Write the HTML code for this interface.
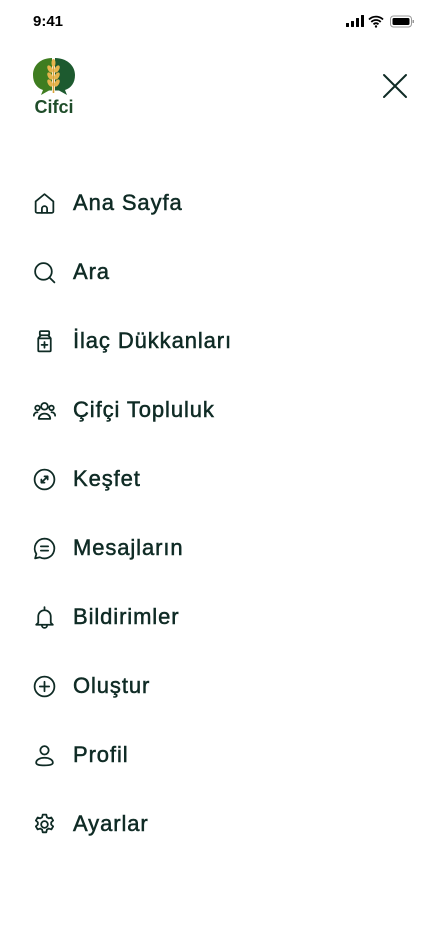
<!DOCTYPE html>
<html><head><meta charset="utf-8"><style>
*{margin:0;padding:0;box-sizing:border-box}
body{width:428px;height:926px;background:#fff;font-family:"Liberation Sans",sans-serif;color:#0f2b25;position:relative;overflow:hidden}
.sb{position:absolute;top:13px;left:33px;font-size:15px;font-weight:bold;color:#000}
.item{position:absolute;left:32px;height:30px;display:flex;align-items:center}
.item svg{width:25px;height:25px;fill:none;stroke:#0f2b25;stroke-width:1.7;stroke-linecap:round;stroke-linejoin:round}
.item span{margin-left:16px;font-size:22px;font-weight:normal;-webkit-text-stroke:0.5px #0f2b25;letter-spacing:0.9px}
</style></head><body>
<div class="sb">9:41</div>
<svg style="position:absolute;left:346px;top:15px" width="70" height="14" viewBox="0 0 70 14">
<rect x="0" y="8" width="3" height="4" rx="0.5" fill="#000"/><rect x="5" y="6" width="3" height="6" rx="0.5" fill="#000"/><rect x="10" y="3" width="3" height="9" rx="0.5" fill="#000"/><rect x="15" y="0" width="3" height="12" rx="0.5" fill="#000"/>
<path d="M23 4.5a10 10 0 0 1 14 0M25.3 7a6.5 6.5 0 0 1 9.4 0M27.6 9.4a3 3 0 0 1 4.8 0" stroke="#000" stroke-width="1.8" fill="none"/><circle cx="30" cy="11.5" r="1.2" fill="#000"/>
<rect x="44.5" y="1" width="21" height="11" rx="3" stroke="#999" fill="none"/><rect x="46.5" y="3" width="17" height="7" rx="1.5" fill="#000"/><rect x="66.5" y="5" width="1.5" height="3" fill="#999"/>
</svg>
<svg style="position:absolute;left:32px;top:57px" width="44" height="58" viewBox="0 0 44 58">
<path d="M20 1C9 1 1 8 1 18c0 8 4 13 10 15l-2 5 8-4.5h3z" fill="#3f7d20"/>
<path d="M23 1c11 0 20 7 20 17 0 8-4 13-10 15l2 5-8-4.5h-4z" fill="#1d5a2f"/>
<path d="M21.5 4v32" stroke="#d8a23a" stroke-width="1.6"/>
<g fill="#e6b44c"><ellipse cx="21.5" cy="6" rx="2" ry="4"/><ellipse cx="18" cy="12" rx="2.2" ry="4" transform="rotate(-30 18 12)"/><ellipse cx="25" cy="12" rx="2.2" ry="4" transform="rotate(30 25 12)"/><ellipse cx="18" cy="19" rx="2.2" ry="4" transform="rotate(-30 18 19)"/><ellipse cx="25" cy="19" rx="2.2" ry="4" transform="rotate(30 25 19)"/><ellipse cx="18" cy="26" rx="2.2" ry="4" transform="rotate(-30 18 26)"/><ellipse cx="25" cy="26" rx="2.2" ry="4" transform="rotate(30 25 26)"/></g>
<text x="22" y="56" text-anchor="middle" font-family="Liberation Sans" font-weight="bold" font-size="18" fill="#1f4d2a">Cifci</text>
</svg>
<svg style="position:absolute;left:382px;top:73px" width="26" height="26" viewBox="0 0 26 26"><path d="M2 2l22 22M24 2L2 24" stroke="#0f2b25" stroke-width="2" stroke-linecap="round"/></svg>

<div class="item" style="top:188px"><svg viewBox="0 0 24 24"><path d="M3.5 10l8.5-7 8.5 7v9.5a1.5 1.5 0 0 1-1.5 1.5H5a1.5 1.5 0 0 1-1.5-1.5z"/><path d="M9.5 21v-4a2.5 2.5 0 0 1 5 0v4"/></svg><span>Ana Sayfa</span></div>
<div class="item" style="top:257px"><svg viewBox="0 0 24 24"><circle cx="11" cy="11" r="8"/><path d="M17 17l4.5 4.5"/></svg><span>Ara</span></div>
<div class="item" style="top:326px"><svg viewBox="0 0 24 24"><rect x="7.5" y="2" width="9" height="4" rx="1"/><path d="M8.5 6L6 9v11.5a1 1 0 0 0 1 1h10a1 1 0 0 0 1-1V9l-2.5-3M6 9h12"/><path d="M12 12.5v5.5M9.2 15.2h5.6"/></svg><span>İlaç Dükkanları</span></div>
<div class="item" style="top:395px"><svg viewBox="0 0 24 24"><circle cx="12" cy="8" r="3.2"/><path d="M6.5 20c0-3 2.5-5 5.5-5s5.5 2 5.5 5z"/><circle cx="5.3" cy="9.5" r="2.2"/><circle cx="18.7" cy="9.5" r="2.2"/><path d="M1.8 17c0-2 1.5-3.3 3.5-3.3M22.2 17c0-2-1.5-3.3-3.5-3.3"/></svg><span>Çifçi Topluluk</span></div>
<div class="item" style="top:464px"><svg viewBox="0 0 24 24"><circle cx="12" cy="12" r="9.5"/><path d="M9 15l6-6M12 9h3v3M9 12v3h3"/></svg><span>Keşfet</span></div>
<div class="item" style="top:533px"><svg viewBox="0 0 24 24"><path d="M12 2.5a9.5 9.5 0 1 1-4.5 17.9L3 21.5l1.2-4.2A9.5 9.5 0 0 1 12 2.5z"/><path d="M8.5 10h7M8.5 14h7"/></svg><span>Mesajların</span></div>
<div class="item" style="top:602px"><svg viewBox="0 0 24 24"><path d="M12 2v1.8M6 17v-6a6 6 0 0 1 12 0v6l2 2H4z"/><path d="M9.5 19.5a2.5 2.5 0 0 0 5 0"/></svg><span>Bildirimler</span></div>
<div class="item" style="top:671px"><svg viewBox="0 0 24 24"><circle cx="12" cy="12" r="9.5"/><path d="M12 7.5v9M7.5 12h9"/></svg><span>Oluştur</span></div>
<div class="item" style="top:740px"><svg viewBox="0 0 24 24"><circle cx="12" cy="7" r="4"/><path d="M4 19c0-3 3.5-4.8 8-4.8s8 1.8 8 4.8c0 2-3.5 2.5-8 2.5S4 21 4 19z"/></svg><span>Profil</span></div>
<div class="item" style="top:809px"><svg viewBox="0 0 24 24"><circle cx="12" cy="12" r="3.2"/><path d="M10.3 2.5h3.4l.6 2.6 1.8 1 2.5-.8 1.7 2.9-1.9 1.8v2l1.9 1.8-1.7 2.9-2.5-.8-1.8 1-.6 2.6h-3.4l-.6-2.6-1.8-1-2.5.8-1.7-2.9 1.9-1.8v-2L3.7 8.2l1.7-2.9 2.5.8 1.8-1z"/></svg><span>Ayarlar</span></div>
</body></html>
